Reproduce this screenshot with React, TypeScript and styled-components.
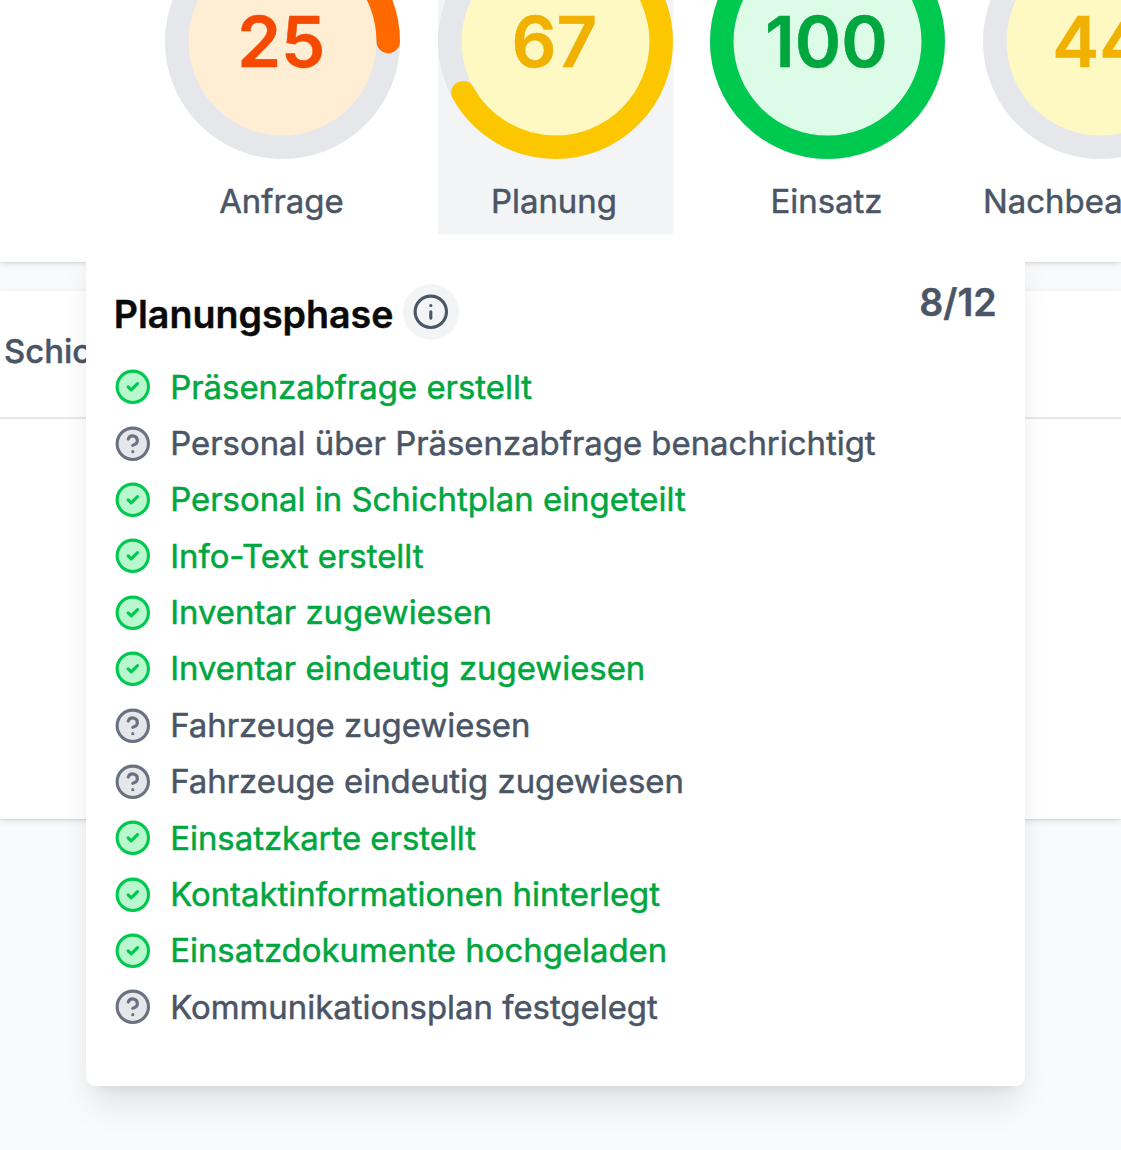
import React from "react";
import styled, { createGlobalStyle } from "styled-components";

const GlobalStyle = createGlobalStyle`
  *, *::before, *::after { box-sizing: border-box; }
  html, body { margin: 0; padding: 0; }
  body {
    background: #f9fafb;
    font-family: Inter, "Liberation Sans", sans-serif;
    -webkit-font-smoothing: antialiased;
    overflow: hidden;
  }
`;

const Page = styled.div`
  position: relative;
  display: flex;
  flex-direction: column;
  width: 1121px;
  height: 1150px;
  overflow: hidden;
  background: #f8fafc;
`;

const elevation = `0 2.35px 7px rgba(0, 0, 0, 0.1), 0 2.35px 4.7px -2.35px rgba(0, 0, 0, 0.1), 0 1px 1px rgba(0, 0, 0, 0.03)`;

const StageStrip = styled.header`
  display: flex;
  align-items: flex-end;
  gap: 37.55px;
  flex: none;
  height: 262.4px;
  padding: 0 0 28.4px 165.4px;
  background: #fff;
  box-shadow: ${elevation};
`;

const Stage = styled.div<{ $active?: boolean }>`
  display: flex;
  flex-direction: column;
  align-items: center;
  flex: none;
  width: 235px;
  background: ${(p) => (p.$active ? "#f3f4f6" : "transparent")};
`;

const Gauge = styled.svg`
  display: block;
  width: 235px;
  height: 235px;
`;

const GaugeValue = styled.text`
  font-family: Inter, sans-serif;
  font-size: 30px;
  font-weight: 600;
  text-anchor: middle;
  stroke: currentColor;
  stroke-width: 0.2px;
`;

const StageLabel = styled.div`
  width: 100%;
  height: 75.4px;
  padding: 19.8px 3px 0 0;
  text-align: center;
  white-space: nowrap;
  font-size: 32.9px;
  line-height: 47px;
  font-weight: 400;
  color: #4a5565;
  -webkit-text-stroke: 0.5px currentColor;
`;

const Card = styled.section`
  display: flex;
  flex-direction: column;
  flex: none;
  height: 528.6px;
  margin-top: 28.2px;
  background: #fff;
  box-shadow: ${elevation};
`;

const CardHeader = styled.div`
  display: flex;
  align-items: center;
  height: 128.6px;
  padding: 0 0 6px 4px;
  border-bottom: 2.35px solid #e5e7eb;
  font-size: 32.9px;
  font-weight: 500;
  color: #4a5565;
  -webkit-text-stroke: 0.4px currentColor;
`;

const Popover = styled.div`
  position: absolute;
  left: 85.6px;
  top: 243.4px;
  width: 939.4px;
  height: 843px;
  padding: 28.4px 28.2px;
  border-radius: 9.4px;
  background: #fff;
  box-shadow: 0 23.5px 35.2px -7px rgba(0, 0, 0, 0.1), 0 9.4px 14.1px -9.4px rgba(0, 0, 0, 0.1);
`;

const PopoverHeader = styled.div`
  display: flex;
  align-items: flex-start;
  justify-content: space-between;
  height: 87.2px;
`;

const TitleGroup = styled.div`
  display: flex;
  align-items: center;
  padding-top: 9px;
`;

const Title = styled.h2`
  margin: 6px 0 0;
  font-size: 37.6px;
  line-height: 56px;
  font-weight: 600;
  color: #0a0a0a;
  -webkit-text-stroke: 0.4px currentColor;
`;

const InfoButton = styled.button`
  display: flex;
  align-items: center;
  justify-content: center;
  width: 56.4px;
  height: 56.4px;
  margin-left: 9.4px;
  padding: 0;
  border: 0;
  border-radius: 50%;
  background: #f3f4f6;
  color: #4a5565;
`;

const Counter = styled.span`
  padding-top: 3px;
  font-size: 37.6px;
  line-height: 56px;
  font-weight: 600;
  color: #4a5565;
  -webkit-text-stroke: 0.4px currentColor;
`;

const Checklist = styled.ul`
  display: flex;
  flex-direction: column;
  margin: 0;
  padding: 0;
  list-style: none;
`;

const Item = styled.li<{ $done: boolean }>`
  display: flex;
  align-items: center;
  gap: 18.8px;
  height: 56.36px;
  font-size: 32.9px;
  line-height: 47px;
  font-weight: 400;
  white-space: nowrap;
  color: ${(p) => (p.$done ? "#00a63e" : "#4a5565")};
  -webkit-text-stroke: 0.5px currentColor;
`;

const Icon = styled.svg`
  display: block;
  flex: none;
  width: 37.6px;
  height: 37.6px;
  fill: none;
  stroke: currentColor;
  stroke-width: 2;
  stroke-linecap: round;
  stroke-linejoin: round;
`;

const StatusIcon = styled(Icon)<{ $done: boolean }>`
  color: ${(p) => (p.$done ? "#00c950" : "#6a7282")};
  circle {
    fill: ${(p) => (p.$done ? "#b9f8cf" : "#e5e7eb")};
  }
`;

const tones = {
  orange: { ring: "#ff6900", text: "#f54900", fill: "#ffedd4" },
  yellow: { ring: "#fdc700", text: "#f0b100", fill: "#fef9c2" },
  green: { ring: "#00c950", text: "#00a63e", fill: "#dcfce7" },
};

const stages: { label: string; value: number; tone: keyof typeof tones; active?: boolean }[] = [
  { label: "Anfrage", value: 25, tone: "orange" },
  { label: "Planung", value: 67, tone: "yellow", active: true },
  { label: "Einsatz", value: 100, tone: "green" },
  { label: "Nachbearbeitung", value: 44, tone: "yellow" },
];

const items: [string, boolean][] = [
  ["Präsenzabfrage erstellt", true],
  ["Personal über Präsenzabfrage benachrichtigt", false],
  ["Personal in Schichtplan eingeteilt", true],
  ["Info-Text erstellt", true],
  ["Inventar zugewiesen", true],
  ["Inventar eindeutig zugewiesen", true],
  ["Fahrzeuge zugewiesen", false],
  ["Fahrzeuge eindeutig zugewiesen", false],
  ["Einsatzkarte erstellt", true],
  ["Kontaktinformationen hinterlegt", true],
  ["Einsatzdokumente hochgeladen", true],
  ["Kommunikationsplan festgelegt", false],
];

function StageGauge({ value, tone }: { value: number; tone: keyof typeof tones }) {
  const t = tones[tone];
  return (
    <Gauge viewBox="0 0 100 100">
      <circle cx="50" cy="50" r="45" fill={t.fill} stroke="#e5e7eb" strokeWidth="10" />
      <circle
        cx="50"
        cy="50"
        r="45"
        fill="none"
        stroke={t.ring}
        strokeWidth="10"
        strokeLinecap="round"
        pathLength={100}
        strokeDasharray={`${value} 100`}
        transform="rotate(-90 50 50)"
      />
      <GaugeValue x="49.5" y="60.8" fill={t.text} color={t.text}>
        {value}
      </GaugeValue>
    </Gauge>
  );
}

export default function App() {
  return (
    <Page>
      <GlobalStyle />
      <StageStrip>
        {stages.map((s) => (
          <Stage key={s.label} $active={s.active}>
            <StageGauge value={s.value} tone={s.tone} />
            <StageLabel>{s.label}</StageLabel>
          </Stage>
        ))}
      </StageStrip>
      <Card>
        <CardHeader>Schicht</CardHeader>
      </Card>
      <Popover>
        <PopoverHeader>
          <TitleGroup>
            <Title>Planungsphase</Title>
            <InfoButton aria-label="Info">
              <Icon viewBox="0 0 24 24">
                <circle cx="12" cy="12" r="10" />
                <path d="M12 16v-4" />
                <path d="M12 8h.01" />
              </Icon>
            </InfoButton>
          </TitleGroup>
          <Counter>8/12</Counter>
        </PopoverHeader>
        <Checklist>
          {items.map(([label, done]) => (
            <Item key={label} $done={done}>
              <StatusIcon viewBox="0 0 24 24" $done={done}>
                <circle cx="12" cy="12" r="10" />
                {done ? (
                  <path d="m9 12 2 2 4-4" />
                ) : (
                  <>
                    <path d="M9.09 9a3 3 0 0 1 5.83 1c0 2-3 3-3 3" />
                    <path d="M12 17h.01" />
                  </>
                )}
              </StatusIcon>
              {label}
            </Item>
          ))}
        </Checklist>
      </Popover>
    </Page>
  );
}
